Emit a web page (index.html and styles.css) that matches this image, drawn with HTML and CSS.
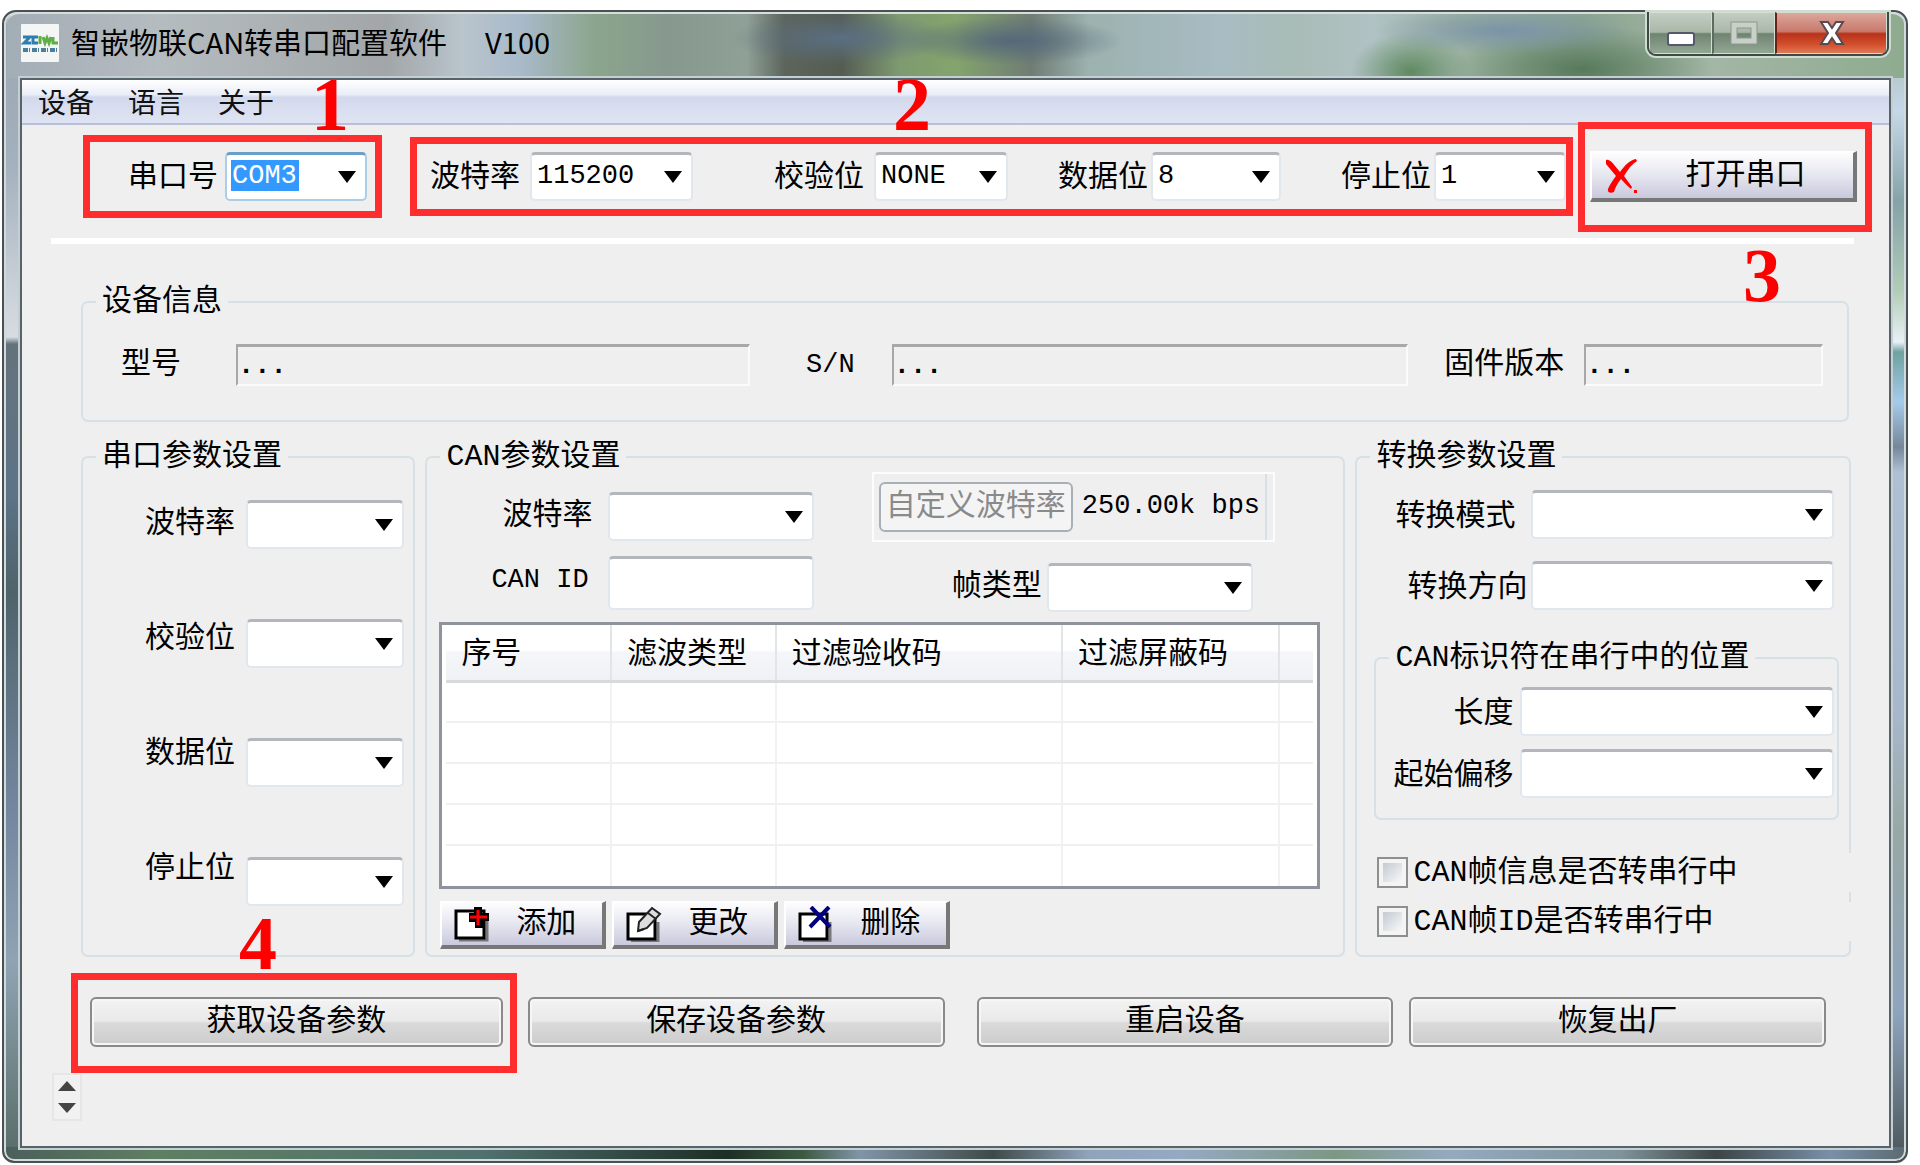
FILE: index.html
```html
<!DOCTYPE html>
<html lang="zh-CN">
<head>
<meta charset="utf-8">
<title>智嵌物联CAN转串口配置软件</title>
<link rel="stylesheet" href="styles.css">
</head>
<body>
<div class="window">
  <header class="titlebar">
    <svg class="app-icon" viewBox="0 0 38 38" aria-hidden="true">
      <rect width="38" height="38" fill="#f3f6f4"/>
      <path d="M2 13h7l-6 6h7M17 13h-5v6h5" fill="none" stroke="#2f7fae" stroke-width="3"/>
      <path d="M19 12v8M22 13l2 6 2-5 2 5 2-6M32 13v6h5" fill="none" stroke="#5fae45" stroke-width="3"/>
      <path d="M2 26h7M11 26h7M20 26h7M29 26h7" stroke="#4b7d9c" stroke-width="4" stroke-dasharray="5 1 1 2"/>
    </svg>
    <h1 class="title">智嵌物联CAN转串口配置软件</h1>
    <span class="version">V100</span>
    <div class="caption">
      <button class="cap cap-min" type="button" aria-label="最小化">
        <svg width="30" height="16" viewBox="0 0 30 16"><rect x="2" y="2" width="26" height="12" rx="2" fill="#fff" stroke="#55596b" stroke-width="2"/></svg>
      </button>
      <button class="cap cap-max" type="button" aria-label="最大化" disabled>
        <svg width="28" height="24" viewBox="0 0 28 24"><rect x="4" y="4" width="20" height="16" fill="none" stroke="#8d988d" stroke-width="7"/><rect x="4" y="4" width="20" height="16" fill="none" stroke="#c9d0c9" stroke-width="5"/></svg>
      </button>
      <button class="cap cap-close" type="button" aria-label="关闭">
        <svg width="28" height="26" viewBox="0 0 28 26"><path d="M3 2h7l4 6 4-6h7l-7 11 7 11h-7l-4-6-4 6H3l7-11z" fill="#fff" stroke="#5a4a52" stroke-width="2"/></svg>
      </button>
    </div>
  </header>

  <main class="client">
    <nav class="menu">
      <a href="#device">设备</a>
      <a href="#language">语言</a>
      <a href="#about">关于</a>
    </nav>

    <section class="toolbar">
      <div class="mark mark-port">
        <label for="port">串口号</label>
        <select id="port" class="combo combo-active"><option>COM3</option></select>
        <span class="step step-1">1</span>
      </div>
      <div class="mark mark-line">
        <div class="line-field"><label for="baud">波特率</label><select id="baud" class="combo"><option>115200</option></select></div>
        <div class="line-field"><label for="parity">校验位</label><select id="parity" class="combo"><option>NONE</option></select></div>
        <div class="line-field"><label for="bits">数据位</label><select id="bits" class="combo"><option>8</option></select></div>
        <div class="line-field"><label for="stop">停止位</label><select id="stop" class="combo"><option>1</option></select></div>
        <span class="step step-2">2</span>
      </div>
      <div class="mark mark-open">
        <button class="tool-btn open-btn" type="button">
          <svg width="34" height="36" viewBox="0 0 34 36" aria-hidden="true"><path d="M2 2c3-1 6 2 9 6l5 6c5-7 10-12 16-13l1 2c-5 3-9 8-13 15l8 11-1 2c-4-3-7-7-10-10-4 5-6 9-7 13-4 2-7 0-6-3 2-5 5-9 8-13L2 6zM30 32h3v3h-3z" fill="#f00"/></svg>
          <span>打开串口</span>
        </button>
        <span class="step step-3">3</span>
      </div>
    </section>
    <hr class="rule">

    <fieldset class="group info">
      <legend>设备信息</legend>
      <div class="info-row">
        <div class="info-field"><label for="model">型号</label><input id="model" class="sunken" value="..." readonly></div>
        <div class="info-field info-sn"><label for="sn" class="latin">S/N</label><input id="sn" class="sunken" value="..." readonly></div>
        <div class="info-field info-fw"><label for="fw">固件版本</label><input id="fw" class="sunken" value="..." readonly></div>
      </div>
    </fieldset>

    <div class="panels">
      <fieldset class="group">
        <legend>串口参数设置</legend>
        <div class="serial">
          <div class="serial-labels">
            <label for="s-baud">波特率</label>
            <label for="s-parity">校验位</label>
            <label for="s-bits">数据位</label>
            <label for="s-stop">停止位</label>
          </div>
          <div class="serial-combos">
            <select id="s-baud" class="combo"></select>
            <select id="s-parity" class="combo"></select>
            <select id="s-bits" class="combo"></select>
            <select id="s-stop" class="combo"></select>
          </div>
        </div>
      </fieldset>

      <fieldset class="group">
        <legend>CAN参数设置</legend>
        <div class="can-form">
          <label for="c-baud" class="can-label can-label-baud">波特率</label>
          <select id="c-baud" class="combo can-baud"></select>
          <div class="custom-rate">
            <button class="rate-btn" type="button" disabled>自定义波特率</button>
            <output class="latin">250.00k bps</output>
          </div>
          <label for="c-id" class="can-label can-label-id latin">CAN ID</label>
          <input id="c-id" class="textbox">
          <div class="frame-type"><label for="c-type">帧类型</label><select id="c-type" class="combo"></select></div>
        </div>
        <div class="filter-box">
          <table class="filters">
            <colgroup><col class="c1"><col class="c2"><col class="c3"><col class="c4"><col></colgroup>
            <thead><tr><th>序号</th><th>滤波类型</th><th>过滤验收码</th><th>过滤屏蔽码</th><th></th></tr></thead>
            <tbody>
              <tr><td></td><td></td><td></td><td></td><td></td></tr>
              <tr><td></td><td></td><td></td><td></td><td></td></tr>
              <tr><td></td><td></td><td></td><td></td><td></td></tr>
              <tr><td></td><td></td><td></td><td></td><td></td></tr>
              <tr><td></td><td></td><td></td><td></td><td></td></tr>
            </tbody>
          </table>
        </div>
        <div class="filter-actions">
          <button class="tool-btn" type="button">
            <svg width="36" height="36" viewBox="0 0 36 36" aria-hidden="true"><path d="M5 34h28V14" fill="none" stroke="#777" stroke-width="3"/><path d="M2 5h28v27H2z" fill="#fff" stroke="#000" stroke-width="3"/><path d="M20 1h8v6h7v8h-6v7h-8v-6h-6V7h5z" fill="#000"/><path d="M24 4v15M16 11h17" stroke="#f00" stroke-width="3"/></svg>
            <span>添加</span>
          </button>
          <button class="tool-btn" type="button">
            <svg width="36" height="36" viewBox="0 0 36 36" aria-hidden="true"><path d="M5 35h27V16" fill="none" stroke="#777" stroke-width="3"/><path d="M2 8h27v25H2z" fill="#fff" stroke="#000" stroke-width="3"/><path d="M12 25l1-9L26 2l8 6-13 14z" fill="#ddd" stroke="#222" stroke-width="2"/><path d="M22 7l8 6M12 25l6-2" stroke="#222" stroke-width="2"/></svg>
            <span>更改</span>
          </button>
          <button class="tool-btn" type="button">
            <svg width="36" height="36" viewBox="0 0 36 36" aria-hidden="true"><path d="M5 35h27V16" fill="none" stroke="#777" stroke-width="3"/><path d="M2 8h27v25H2z" fill="#fff" stroke="#000" stroke-width="3"/><path d="M13 1l19 20M31 1L12 21" stroke="#000080" stroke-width="4"/></svg>
            <span>删除</span>
          </button>
        </div>
      </fieldset>

      <fieldset class="group">
        <legend>转换参数设置</legend>
        <div class="conv-row"><label for="mode">转换模式</label><select id="mode" class="combo"></select></div>
        <div class="conv-row conv-dir"><label for="dir">转换方向</label><select id="dir" class="combo"></select></div>
        <fieldset class="group ident">
          <legend>CAN标识符在串行中的位置</legend>
          <div class="ident-grid">
            <label for="len">长度</label><select id="len" class="combo"></select>
            <label for="off">起始偏移</label><select id="off" class="combo"></select>
          </div>
        </fieldset>
        <label class="check check-first"><input type="checkbox">CAN帧信息是否转串行中</label>
        <label class="check"><input type="checkbox">CAN帧ID是否转串行中</label>
      </fieldset>
    </div>

    <div class="actions">
      <div class="action-first">
        <button class="push" type="button">获取设备参数</button>
        <span class="step step-4">4</span>
      </div>
      <button class="push" type="button">保存设备参数</button>
      <button class="push push-restart" type="button">重启设备</button>
      <button class="push push-reset" type="button">恢复出厂</button>
    </div>

    <div class="spinner">
      <button type="button" aria-label="增加"><svg width="18" height="10" viewBox="0 0 18 10"><path d="M9 0l9 10H0z" fill="#444"/></svg></button>
      <button type="button" aria-label="减少"><svg width="18" height="10" viewBox="0 0 18 10"><path d="M9 10L0 0h18z" fill="#444"/></svg></button>
    </div>
  </main>
</div>
</body>
</html>
```
FILE: styles.css
```css
* { box-sizing: border-box; }

body {
  margin: 0;
  padding: 10px 12px 2px 2px;
  background: #fff;
  color: #000;
  font: 30px/30px "Liberation Mono", "Noto Sans CJK SC", monospace;
}

button, input, select { font: inherit; color: inherit; margin: 0; }
label, legend, button, th { white-space: nowrap; }
.latin { font-size: 27px; }

/* window frame */
.window {
  display: flex;
  flex-direction: column;
  min-height: calc(100vh - 12px);
  padding: 0 15px 13px 16px;
  border: 2px solid #4b5052;
  border-radius: 14px 14px 12px 12px;
  box-shadow: inset 0 0 0 2px #cfdadd;
  background:
    linear-gradient(90deg, #4a5f5a, #5f7f62 8%, #51716f 25%, #1c2e25 38%, #3c5a41 42%, #8195a8 45%, #3e4a48 52%, #8fa3bb 57%, #94a9c2 62%, #7d9784 70%, #93aac0 76%, #7f939b 85%, #3c4444 90%, #7890a8 96%, #5c6a70) bottom / 100% 14px no-repeat,
    linear-gradient(180deg, #9aa6b0, #a3b0bd 150px, #d8dce2 325px, #65727c 332px, #5d7387 480px, #4f636b 580px, #7487a0 800px, #90a3b4 950px, #566c64) 0 0 / 19px 100% no-repeat,
    linear-gradient(180deg, #9fb0a2, #c5d8e8 100px, #86a2a8 190px, #b2cdb6 280px, #e8f1f6 330px, #6fa2a0 340px, #a5cbec 390px, #77879a 435px, #afbfd4 460px, #a8b8cc 700px, #98a8a4 820px, #8fa4be 1000px, #4a5457) 100% 0 / 19px 100% no-repeat,
    #95a5ab;
}

.titlebar {
  display: flex;
  align-items: flex-start;
  height: 66px;
  margin: 0 -13px;
  padding: 0 14px;
  border-radius: 12px 12px 0 0;
  border-top: 2px solid #d5dddd;
  background:
    radial-gradient(ellipse 110px 26px at 44% 38%, #5a6f82, #5a6f8200),
    radial-gradient(ellipse 110px 24px at 53% 42%, #54687a, #54687a00),
    radial-gradient(ellipse 130px 24px at 79% 26%, #7b93a8, #7b93a800),
    radial-gradient(ellipse 60px 40px at 74% 90%, #5f8a60, #5f8a6000),
    radial-gradient(ellipse 130px 44px at 83% 86%, #587a5c, #587a5c00),
    linear-gradient(90deg, #a3adb6, #b5bcc0 8%, #a2a6a8 20%, #b9c4cc 24%, #a9bacb 27%, #8ba58c 31%, #87988f 35%, #8fa096 39%, #5c645c 41%, #555c52 44%, #7e9a70 47%, #84a46c 50%, #6f7c74 54%, #9cb2ae 57%, #a8bcc4 64%, #a9bcb6 68%, #b0c2c4 72%, #9bb29f 77%, #8ba58f 83%, #a4b6a6 90%, #8eab8f);
}
.app-icon { flex: none; width: 38px; height: 38px; margin-top: 10px; border-radius: 1px; }
.title, .version { margin: 7px 0 0 12px; font: 29px/40px "Noto Sans CJK SC", sans-serif; }
.version { margin-left: 38px; }
.caption {
  display: flex;
  margin: -2px 1px 0 auto;
  border: 2px solid #3f4a46;
  border-top: 0;
  border-radius: 0 0 9px 9px;
  box-shadow: 0 0 0 2px #cfdcd2;
  overflow: hidden;
}
.cap {
  display: flex;
  align-items: center;
  justify-content: center;
  width: 63px;
  height: 42px;
  padding: 6px 0 0;
  border: 1px solid #d5ded5;
  background: linear-gradient(#c3cdc2, #a9b7a8 48%, #6f8372 52%, #93a892);
}
.cap-min { padding-top: 12px; }
.cap-max { padding-top: 0; border-left: 2px solid #5d6a60; }
.cap-close { width: 112px; padding-top: 0; border-left: 2px solid #6b2018; background: linear-gradient(#dca79c, #c87a6c 46%, #b8321a 52%, #d4512e 80%, #e07a58); }

.client {
  flex: 1;
  border: 2px solid #56646a;
  box-shadow: 0 0 0 2px #c3cfd2;
  background: #efefef;
}
.menu {
  display: flex;
  gap: 34px;
  height: 45px;
  padding: 4px 16px;
  border-bottom: 2px solid #b9bfd6;
  background: linear-gradient(#fff, #e9edf7 34%, #d3d9ec 40%, #dfe4f4);
}
.menu a { color: #111; text-decoration: none; font: 28px/34px "Noto Sans CJK SC", sans-serif; }

/* drop-downs and text boxes */
.combo, .textbox {
  flex: 1;
  min-width: 0;
  width: 100%;
  height: 49px;
  border: 2px solid #e1e7ef;
  border-top: 3px solid #b4b6bd;
  border-radius: 5px;
  background: #fff;
  font-size: 27px;
}
.combo {
  appearance: none;
  padding: 0 30px 2px 5px;
  background: #fff url("data:image/svg+xml,%3Csvg xmlns='http://www.w3.org/2000/svg' width='18' height='12'%3E%3Cpath d='M0 0h18L9 12z'/%3E%3C/svg%3E") right 9px center no-repeat;
}
.combo-active {
  border-color: #a9cfe8;
  border-top-color: #6a9fc8;
  color: #fff;
  background:
    url("data:image/svg+xml,%3Csvg xmlns='http://www.w3.org/2000/svg' width='18' height='12'%3E%3Cpath d='M0 0h18L9 12z'/%3E%3C/svg%3E") right 9px center no-repeat,
    linear-gradient(#3399ff, #3399ff) 4px 5px / 68px 31px no-repeat,
    #fff;
}
.combo-active option { color: #000; background: #fff; }

/* toolbar with the highlighted steps */
.toolbar {
  display: grid;
  grid-template-columns: minmax(0, 299fr) minmax(0, 1196fr) minmax(0, 294fr);
  align-items: center;
  padding: 10px 17px 20px 61px;
}
.mark { position: relative; display: flex; align-items: center; border: 7px solid #ff2d2d; }
.mark-port { height: 83px; padding: 0 8px 0 38px; gap: 7px; }
.mark-line {
  display: grid;
  grid-template-columns: minmax(0, 357fr) minmax(0, 284fr) minmax(0, 283fr) minmax(0, 225fr);
  height: 79px;
  margin: 0 5px 0 28px;
}
.mark-open { height: 110px; margin: -14px 0; padding: 0 8px 0 5px; }
.line-field { display: flex; align-items: center; gap: 10px; min-width: 0; }
.line-field:nth-child(1) { padding: 0 81px 0 13px; }
.line-field:nth-child(2) { padding-right: 50px; }
.line-field:nth-child(3) { padding-right: 60px; }
.line-field:nth-child(n+3) { gap: 3px; }
.toolbar label { padding-top: 3px; }

.step {
  position: absolute;
  color: #f00;
  font: bold 76px/52px "Liberation Serif", serif;
  pointer-events: none;
}
.step-1 { right: 26px; top: -64px; }
.step-2 { left: 476px; top: -66px; }
.step-3 { right: 84px; bottom: -76px; }
.step-4 { left: 149px; top: -80px; }

.tool-btn {
  display: flex;
  align-items: center;
  height: 48px;
  padding: 0 0 0 12px;
  border: 0 solid #777;
  border-width: 2px 4px 4px 2px;
  border-color: #fff #777 #777 #fff;
  background: linear-gradient(#fdfdfe, #e6e6f0 50%, #c9c9dd);
}
.tool-btn svg { flex: none; }
.open-btn { flex: 1; height: 51px; }
.open-btn span { flex: 1; }

.rule { height: 6px; margin: 0 35px 43px 29px; border: 0; background: #fff; }

/* group boxes */
.group {
  min-width: 0;
  margin: 0;
  padding: 0;
  border: 2px solid #d5e0e7;
  border-radius: 7px;
}
.group legend { margin-left: 13px; padding: 0 6px; }

.info { margin: 0 40px 20px 59px; }
.info-row {
  display: grid;
  grid-template-columns: minmax(0, 628fr) minmax(0, 657fr) minmax(0, 414fr);
  padding: 27px 24px 34px 38px;
}
.info-field { display: flex; align-items: center; gap: 55px; min-width: 0; }
.info-sn { gap: 37px; padding-left: 56px; }
.info-fw { gap: 20px; padding-left: 36px; }
.sunken {
  flex: 1;
  min-width: 0;
  height: 42px;
  padding: 0;
  border: 2px solid #fbfbfb;
  border-top: 3px solid #a8a8a8;
  border-left-color: #a8a8a8;
  background: #efefef;
  font-size: 27px;
  font-weight: bold;
}

.panels {
  display: grid;
  grid-template-columns: 334fr 919fr 495fr;
  gap: 10px;
  margin: 0 38px 0 59px;
}

.serial { display: flex; gap: 11px; padding: 28px 9px 0 62px; }
.serial-labels { display: flex; flex-direction: column; gap: 85px; padding-top: 9px; }
.serial-combos { display: flex; flex: 1; flex-direction: column; gap: 70px; min-width: 0; }
.serial-combos .combo { flex: none; }

.can-form {
  display: grid;
  grid-template-columns: minmax(0, 180fr) minmax(0, 206fr) minmax(0, 461fr);
  grid-template-rows: 70px 54px;
  gap: 14px 0;
  padding-right: 68px;
  align-items: center;
}
.can-label { padding-right: 15px; text-align: right; }
.can-label-baud { padding-top: 18px; }
.can-label-id { padding: 0 19px 6px 0; }
.can-baud { margin-top: 19px; }
.textbox { height: 54px; padding: 0 8px; }
.custom-rate {
  display: flex;
  align-items: center;
  gap: 9px;
  height: 70px;
  margin-left: 58px;
  padding-left: 5px;
  border: 2px solid #fcfcfc;
  box-shadow: inset -6px 0 0 #efefef, inset -8px 0 0 #d5e0e7;
}
.rate-btn {
  flex: none;
  height: 50px;
  padding: 0 5px;
  border: 2px solid #a9b0b5;
  border-radius: 6px;
  background: #f4f4f4;
  color: #8a8a8a;
}
.custom-rate output { padding-bottom: 3px; white-space: nowrap; }
.frame-type { display: flex; align-items: center; gap: 5px; padding: 8px 22px 0 138px; }

.filter-box {
  margin: 12px 23px 12px 12px;
  padding: 0 4px;
  border: 3px solid #8e939d;
  background: #fff;
}
.filters { width: 100%; border-collapse: collapse; table-layout: fixed; }
.c1 { width: 19%; }
.c2 { width: 19%; }
.c3 { width: 33%; }
.c4 { width: 25%; }
.filters th {
  height: 56px;
  padding: 5px 15px 0;
  border-right: 2px solid #e2e4e8;
  border-bottom: 3px solid #d8d9db;
  background: linear-gradient(#fff 45%, #f5f6f9 50%, #f0f1f4);
  font-weight: normal;
  text-align: left;
}
.filters td { height: 41px; padding: 0; border-right: 2px solid #f2f2f2; border-bottom: 2px solid #f0f0f0; }
.filters th:last-child, .filters td:last-child { border-right: 0; }
.filters tbody tr:last-child td { border-bottom: 0; }

.filter-actions { display: flex; gap: 6px; padding: 0 0 6px 13px; }
.filter-actions .tool-btn { width: 166px; gap: 26px; }

.conv-row { display: flex; align-items: center; gap: 16px; padding: 18px 15px 0 38px; }
.conv-dir { gap: 4px; padding: 22px 15px 0 50px; }
.conv-row label, .ident-grid label { padding-top: 4px; }
.ident { margin: 33px 10px 0 17px; }
.ident-grid {
  display: grid;
  grid-template-columns: auto 1fr;
  gap: 13px 7px;
  align-items: center;
  padding: 14px 3px 20px 17px;
}
.ident-grid label { text-align: right; }

/* the tick box rows run over the edge of their group box */
.check { display: flex; align-items: center; gap: 5px; height: 39px; margin: 10px -4px 0 20px; background: #efefef; }
.check-first { margin-top: 33px; }
.check input {
  appearance: none;
  flex: none;
  width: 31px;
  height: 31px;
  border: 2px solid #8e8f8f;
  background: linear-gradient(135deg, #c3cad2, #f8f8f8) content-box, #f4f4f4;
  padding: 4px;
}

/* bottom buttons */
.actions { display: flex; margin: 40px 63px 0 68px; }
.action-first { position: relative; display: flex; flex: 1; }
.action-first::after {
  content: "";
  position: absolute;
  inset: -24px -14px -26px -19px;
  border: 7px solid #ff2d2d;
  pointer-events: none;
}
.push {
  flex: 1;
  height: 50px;
  padding: 0;
  border: 2px solid #8a8a8a;
  border-radius: 6px;
  box-shadow: inset 0 0 0 2px #f6f6f6;
  background: linear-gradient(#f3f3f3, #e9e9e9 48%, #dadada 52%, #cccccc);
}
.actions > .push { margin-left: 25px; }
.actions > .push-restart { margin-left: 32px; }
.actions > .push-reset { margin-left: 16px; }

.spinner {
  display: flex;
  flex-direction: column;
  width: 30px;
  margin: 26px 0 18px 30px;
  border: 2px solid #e6e6e6;
}
.spinner button { display: flex; align-items: center; justify-content: center; height: 22px; padding: 0; border: 0; background: #f1f1f1; }
```
